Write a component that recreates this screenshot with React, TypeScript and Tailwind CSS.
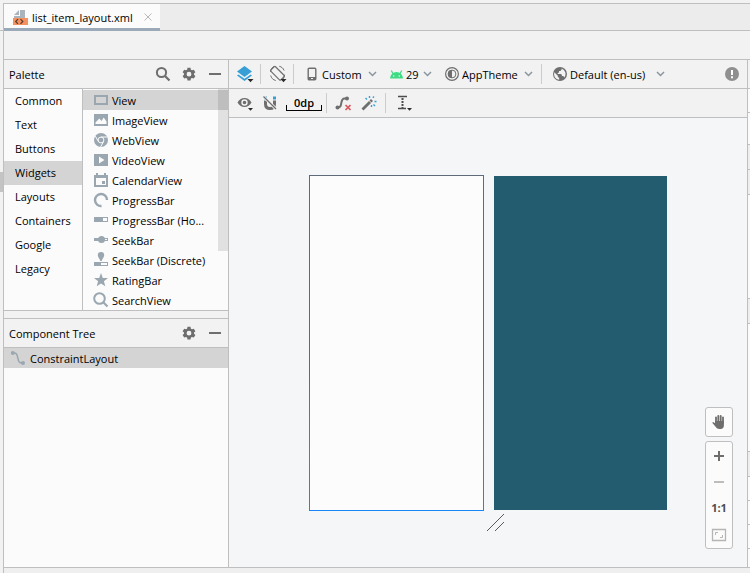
import * as React from "react";
import clsx from "clsx";

type IconProps = { className?: string; children: React.ReactNode };

function Icon({ className, children }: IconProps) {
  return (
    <svg viewBox="0 0 16 16" fill="none" aria-hidden="true" className={clsx("size-4 shrink-0", className)}>
      {children}
    </svg>
  );
}

/* toolbar + header icons */

const SearchIcon = () => (
  <Icon className="text-[#6e6e6e]">
    <circle cx="6.5" cy="6.5" r="4.6" stroke="currentColor" strokeWidth="2" />
    <path d="M10 10l4.5 4.5" stroke="currentColor" strokeWidth="2.2" />
  </Icon>
);

const GearIcon = () => (
  <Icon className="text-[#6e6e6e]">
    <path fill="currentColor" fillRule="evenodd" d="M6.500 1.800h3l.4 1.900 1.100.6 1.800-.5 1.600 2.500-1.400 1.300v1.100l1.400 1.300-1.600 2.500-1.800-.5-1.100.6-.4 1.900h-3l-.4-1.900-1.100-.6-1.800.5L1.600 10 3 8.700V7.600L1.600 6.300l1.600-2.500 1.800.5 1.100-.6zM8 5.800a2.400 2.400 0 1 0 0 4.800 2.400 2.400 0 0 0 0-4.800z" />
  </Icon>
);

const MinusIcon = () => (
  <Icon>
    <path d="M2 7h12v2H2z" fill="#6e6e6e" />
  </Icon>
);

const DropMark = () => <path d="M11 13h5l-2.500 2.800z" fill="#2b2b2b" />;

const LayersIcon = () => (
  <svg viewBox="0 0 18 18" aria-hidden="true" className="size-[18px] shrink-0">
    <path d="M8.500 1L16 6.500 8.500 12 1 6.500z" fill="#389fd6" />
    <path d="M2.400 9.400L8.500 13.800l6.100-4.400L16 10.500 8.500 16 1 10.500z" fill="#389fd6" />
    <path d="M11.500 14h6l-3 3.200z" fill="#2b2b2b" />
  </svg>
);

const RotateIcon = () => (
  <svg viewBox="0 0 18 18" fill="none" aria-hidden="true" className="size-[18px] shrink-0">
    <rect x="5.300" y="1.300" width="6.400" height="14" rx="1" transform="rotate(-45 8.500 8.300)" stroke="#6e6e6e" strokeWidth="1.200" />
    <path d="M1.500 6.800C1.500 4 3.400 1.800 6 1.300M15.500 9.800c0 1.600-.5 2.900-1.500 4.200M1.700 10.500c.6 2.500 2.400 4.400 5 5M10.300 1.300c2.300.5 4 2 4.800 4.200" stroke="#6e6e6e" />
    <path d="M11.500 14h6l-3 3.200z" fill="#2b2b2b" />
  </svg>
);

const PhoneIcon = () => (
  <Icon>
    <rect x="4.200" y="2.200" width="7.600" height="11.600" rx="1" stroke="#6e6e6e" strokeWidth="1.400" />
    <path d="M4 11h8v3H4z" fill="#6e6e6e" />
    <path d="M7 12h2v1H7z" fill="#f2f2f2" />
  </Icon>
);

const AndroidIcon = () => (
  <Icon>
    <path d="M2 12.500a6.500 6.500 0 0 1 13 0z" fill="#3ddc84" />
    <path d="M5.200 8L3.300 4.500M11.800 8l1.900-3.500" stroke="#3ddc84" strokeWidth="1.200" />
    <circle cx="5.700" cy="10" r=".8" fill="#f2f2f2" />
    <circle cx="11.300" cy="10" r=".8" fill="#f2f2f2" />
  </Icon>
);

const ThemeIcon = () => (
  <Icon>
    <circle cx="8" cy="8" r="6.400" stroke="#6e6e6e" strokeWidth="1.200" />
    <circle cx="8" cy="8" r="3.900" stroke="#6e6e6e" />
    <path d="M8 4a4 4 0 0 0 0 8z" fill="#6e6e6e" />
  </Icon>
);

const GlobeIcon = () => (
  <Icon>
    <circle cx="8" cy="8" r="7" fill="#6e6e6e" />
    <path d="M2.300 6.200l3.500 3.600v1l1.400 1.300v1.600C4.300 13.400 2 11 2.100 8zM9.600 2.500v1.200L8.300 5H7v1.500L5.700 7v1.100h3.600l.8 1.900h1.200l1 1.600A5.900 5.900 0 0 0 9.600 2.500z" fill="#f2f2f2" />
  </Icon>
);

const WarnIcon = () => (
  <Icon>
    <circle cx="8" cy="8" r="7" fill="#8f8f8f" />
    <path d="M7 4h2v5H7zM7 10.300h2v2H7z" fill="#fff" />
  </Icon>
);

const ChevronIcon = () => (
  <svg viewBox="0 0 9 6" fill="none" aria-hidden="true" className="pointer-events-none h-[6px] w-[9px] shrink-0">
    <path d="M1 1l3.500 3.500L8 1" stroke="#8b959e" strokeWidth="1.500" />
  </svg>
);

const EyeIcon = () => (
  <Icon>
    <path fillRule="evenodd" fill="#6e6e6e" d="M7.500 3C4.500 3 1.800 4.800.5 7.500 1.800 10.200 4.500 12 7.500 12s5.700-1.800 7-4.500C13.200 4.800 10.500 3 7.500 3zm0 1.300a3.200 3.200 0 1 1 0 6.400 3.200 3.200 0 0 1 0-6.400zm0 1.400a1.800 1.800 0 1 0 0 3.600 1.800 1.800 0 0 0 0-3.600z" />
    <DropMark />
  </Icon>
);

const MagnetIcon = () => (
  <Icon>
    <path d="M3.500 5.500V9c0 3 2 4.500 4.500 4.500S12.500 12 12.500 9V5.500" stroke="#6e6e6e" strokeWidth="3" />
    <path d="M2 1.500h3v3H2zM11 1.500h3v3h-3z" fill="#389fd6" />
    <path d="M1 1l14 14" stroke="#f2f2f2" strokeWidth="3" />
    <path d="M1.500 1.500l12.500 12.500" stroke="#6e6e6e" strokeWidth="1.300" />
  </Icon>
);

const ClearConstraintsIcon = () => (
  <Icon>
    <path d="M1.500 12.500h2c4.500 0 1-9 6-9h2" stroke="#6e6e6e" strokeWidth="2" />
    <circle cx="2.500" cy="12.500" r="2" fill="#6e6e6e" />
    <circle cx="12" cy="3.500" r="2" fill="#6e6e6e" />
    <path d="M10.500 10l5 5M15.500 10l-5 5" stroke="#db5860" strokeWidth="1.700" />
  </Icon>
);

const WandIcon = () => (
  <Icon>
    <path d="M1.500 14.500l7.500-7.500" stroke="#6e6e6e" strokeWidth="2.800" />
    <path d="M9.500 6.500l1.500-1.500" stroke="#6e6e6e" strokeWidth="2.800" />
    <path d="M8.500 1v2M4.500 3l1.500 1.500M13 1.500l-1.200 1.200M13.500 6.500h2M12.500 9.500l1.500 1.500M10.500 10v2" stroke="#389fd6" strokeWidth="1.400" />
  </Icon>
);

const GuidelineIcon = () => (
  <Icon>
    <path d="M2 1.500h9M2 13.500h8" stroke="#4d4d4d" strokeWidth="1.400" />
    <path d="M6.500 3v10" stroke="#4d4d4d" strokeWidth="2" strokeDasharray="2 1" />
    <DropMark />
  </Icon>
);

const XmlFileIcon = () => (
  <Icon>
    <path d="M8 1h5v8H2V7h6zM7 1v5H2z" fill="#9aa7b0" opacity=".85" />
    <path d="M1 9h15v7H1z" fill="#f4915e" />
    <path d="M6 10.200L3.700 12.500 6 14.800M8.500 10.200l2.300 2.300-2.300 2.300" stroke="#5c3b2c" strokeWidth="1.200" />
  </Icon>
);

/* palette icons, all in the same grey-blue */

const WIDGETS: { name: string; icon: React.ReactNode }[] = [
  { name: "View", icon: <rect x="2" y="4" width="12" height="8" stroke="currentColor" strokeWidth="2" /> },
  { name: "ImageView", icon: <path fillRule="evenodd" fill="currentColor" d="M1 2h14v12H1zM2.500 12h11V9.500L10.700 5.500 8.500 9 6.300 6.500 2.500 10.500z" /> },
  {
    name: "WebView",
    icon: (
      <>
        <circle cx="8" cy="8" r="7" fill="currentColor" />
        <circle cx="8" cy="8" r="2.900" stroke="#fbfbfb" strokeWidth="1" />
        <path d="M8 5h6.300M5.400 9.500L2.300 4.200M10.600 9.500L7.500 15" stroke="#fbfbfb" />
      </>
    ),
  },
  { name: "VideoView", icon: <path fillRule="evenodd" fill="currentColor" d="M1 2h14v12H1zM6 4.500v7L11.500 8z" /> },
  { name: "CalendarView", icon: <path fillRule="evenodd" fill="currentColor" d="M3 1h2v2h6V1h2v2h2v12H1V3h2zM3 6v7h10V6zM9 9h3v3H9z" /> },
  { name: "ProgressBar", icon: <path d="M8.500 14A6 6 0 1 1 14 8" stroke="currentColor" strokeWidth="2.400" /> },
  { name: "ProgressBar (Ho...", icon: <path fillRule="evenodd" fill="currentColor" d="M1 5h14v5H1zM10 6v3h4V6z" /> },
  {
    name: "SeekBar",
    icon: (
      <>
        <path fillRule="evenodd" fill="currentColor" d="M1 6h14v3H1zM11.500 7v1H14V7z" />
        <circle cx="8.500" cy="7.500" r="3.500" fill="currentColor" />
      </>
    ),
  },
  {
    name: "SeekBar (Discrete)",
    icon: <path fillRule="evenodd" fill="currentColor" d="M8 0a3.200 3.200 0 0 1 3.200 3.200C11.200 5.500 9 7 8.700 9H7.300C7 7 4.800 5.500 4.800 3.200A3.200 3.200 0 0 1 8 0zM1 10h14v4H1zM8 11v2h6v-2z" />,
  },
  { name: "RatingBar", icon: <path fill="currentColor" d="M8 1l1.800 4.900 5.200.2-4.100 3.200 1.400 5L8 11.400l-4.300 2.900 1.400-5L1 6.100l5.200-.2z" /> },
  {
    name: "SearchView",
    icon: (
      <>
        <circle cx="6.500" cy="6.500" r="5.300" stroke="currentColor" strokeWidth="2" />
        <path d="M10.500 10.500l4 4" stroke="currentColor" strokeWidth="2.200" />
      </>
    ),
  },
];

const CATEGORIES = ["Common", "Text", "Buttons", "Widgets", "Layouts", "Containers", "Google", "Legacy"];

function IconButton({ label, className, children }: { label: string; className?: string; children: React.ReactNode }) {
  return (
    <button type="button" aria-label={label} title={label} className={clsx("flex shrink-0 items-center justify-center", className)}>
      {children}
    </button>
  );
}

function Divider() {
  return <span className="h-5 w-px shrink-0 bg-[#cccccc]" />;
}

type ToolbarSelectProps = { label: string; value: string; icon: React.ReactNode; width: string; className?: string };

function ToolbarSelect({ label, value, icon, width, className }: ToolbarSelectProps) {
  return (
    <label className={clsx("flex shrink-0 items-center", className)}>
      {icon}
      <select aria-label={label} className={clsx("mr-1 ml-0.5 appearance-none pt-0.5 outline-none", width)}>
        <option>{value}</option>
      </select>
      <ChevronIcon />
    </label>
  );
}

function PanelHeader({ title, children }: { title: string; children: React.ReactNode }) {
  return (
    <header className="flex h-7 shrink-0 items-center gap-[10px] px-[5px]">
      <h2 className="mr-auto pt-0.5">{title}</h2>
      {children}
    </header>
  );
}

function Palette() {
  const [category, setCategory] = React.useState("Widgets");
  const [widget, setWidget] = React.useState("View");

  return (
    <section className="shrink-0 border-b border-[#bfbfbf]">
      <PanelHeader title="Palette">
        <IconButton label="Search"><SearchIcon /></IconButton>
        <IconButton label="Palette settings"><GearIcon /></IconButton>
        <IconButton label="Hide palette"><MinusIcon /></IconButton>
      </PanelHeader>
      <div className="flex h-[222px] border-t border-[#bfbfbf] bg-[#fbfbfb]">
        <div className="flex w-[79px] shrink-0 flex-col border-r border-[#bfbfbf]">
          {CATEGORIES.map((name) => (
            <button key={name} type="button" onClick={() => setCategory(name)} className={clsx("h-6 shrink-0 pl-[11px] text-left", name === category && "bg-[#d4d4d4]")}>
              {name}
            </button>
          ))}
        </div>
        <div className="relative min-w-0 flex-1 overflow-hidden pt-px">
          {WIDGETS.map(({ name, icon }) => (
            <button key={name} type="button" onClick={() => setWidget(name)} className={clsx("flex h-5 w-full items-center gap-[3px] pl-[10px] text-left whitespace-nowrap", name === widget && "bg-[#d4d4d4]")}>
              <Icon className="text-[#9aa7b0]">{icon}</Icon>
              <span className="pt-0.5">{name}</span>
            </button>
          ))}
          <span className="absolute top-0 right-0 h-[162px] w-[10px] bg-black/10" />
        </div>
      </div>
    </section>
  );
}

function ComponentTree() {
  return (
    <section className="mt-[7px] flex min-h-0 flex-1 flex-col border-t border-[#bfbfbf]">
      <PanelHeader title="Component Tree">
        <IconButton label="Tree settings"><GearIcon /></IconButton>
        <IconButton label="Hide component tree"><MinusIcon /></IconButton>
      </PanelHeader>
      <div className="min-h-0 flex-1 border-t border-[#bfbfbf] bg-[#fbfbfb]">
        <button type="button" className="flex h-5 w-full items-center gap-1 bg-[#d4d4d4] pl-[6px] text-left">
          <Icon className="text-[#9aa7b0]">
            <path d="M2.500 3h2c5 0 1.500 10 7 10h1" stroke="currentColor" strokeWidth="1.500" />
            <circle cx="2.800" cy="3" r="2" fill="currentColor" />
            <circle cx="13" cy="13" r="2" fill="currentColor" />
          </Icon>
          <span className="pt-0.5">ConstraintLayout</span>
        </button>
      </div>
    </section>
  );
}

function DesignToolbar() {
  return (
    <div className="shrink-0">
      <div className="flex h-7 items-center px-[7px]">
        <IconButton label="Select design surface" className="mr-[6px]"><LayersIcon /></IconButton>
        <Divider />
        <IconButton label="Orientation" className="mr-[6px] ml-2"><RotateIcon /></IconButton>
        <Divider />
        <ToolbarSelect label="Device" value="Custom" width="w-[42px]" className="ml-[10px]" icon={<PhoneIcon />} />
        <ToolbarSelect label="API version" value="29" width="w-[13px]" className="ml-[11px]" icon={<AndroidIcon />} />
        <ToolbarSelect label="Theme" value="AppTheme" width="w-[58px]" className="mr-2 ml-3" icon={<ThemeIcon />} />
        <Divider />
        <ToolbarSelect label="Locale" value="Default (en-us)" width="w-[82px]" className="ml-[10px]" icon={<GlobeIcon />} />
        <IconButton label="Warnings" className="ml-auto"><WarnIcon /></IconButton>
      </div>
      <div className="flex h-[30px] items-center border-y border-[#bfbfbf] pl-2">
        <IconButton label="View options"><EyeIcon /></IconButton>
        <IconButton label="Autoconnect" className="mr-2 ml-[9px]"><MagnetIcon /></IconButton>
        <button type="button" className="relative mr-1 h-4 w-9 shrink-0 text-center leading-3 font-semibold">
          0dp
          <span className="absolute inset-x-0 bottom-0 h-[6px] border-x border-b border-black" />
        </button>
        <Divider />
        <IconButton label="Clear all constraints" className="ml-2"><ClearConstraintsIcon /></IconButton>
        <IconButton label="Infer constraints" className="mr-2 ml-[10px]"><WandIcon /></IconButton>
        <Divider />
        <IconButton label="Guidelines" className="ml-[10px]"><GuidelineIcon /></IconButton>
      </div>
    </div>
  );
}

function ZoomControls() {
  const box = "flex w-7 flex-col items-center rounded-[3px] border border-[#bfbfbf] bg-[#fbfbfb]";
  return (
    <div className="absolute right-[14px] bottom-[18px] flex flex-col gap-1">
      <div className={box}>
        <IconButton label="Pan" className="h-7">
          <Icon>
            <path d="M5 9V3.300M7.300 8V1.800M9.700 8V1.800M12 9V3.300" stroke="#6e6e6e" strokeWidth="1.800" strokeLinecap="round" />
            <path d="M4.100 7h8.800v4.500c0 2-1.300 3.500-3.200 3.500H8.200c-1.500 0-2.400-.6-3.200-1.700L1.200 8.800l1-.8 1.900 1.300z" fill="#6e6e6e" />
          </Icon>
        </IconButton>
      </div>
      <div className={box}>
        <IconButton label="Zoom in" className="h-7">
          <Icon><path d="M7 3h2v4h4v2H9v4H7V9H3V7h4z" fill="#6e6e6e" /></Icon>
        </IconButton>
        <IconButton label="Zoom out" className="h-6">
          <Icon><path d="M3 7h10v2H3z" fill="#bdbdbd" /></Icon>
        </IconButton>
        <button type="button" className="h-7 font-bold text-[#4d4d4d]">1:1</button>
        <IconButton label="Zoom to fit" className="h-[26px]">
          <Icon>
            <path d="M1.500 2.500h13v11h-13z" stroke="#b5b5b5" strokeWidth="1.300" />
            <path d="M4.500 8V5.500H7M11.500 8v2.500H9" stroke="#b5b5b5" />
          </Icon>
        </IconButton>
      </div>
    </div>
  );
}

function DesignSurface() {
  return (
    <div className="relative flex min-h-0 flex-1 items-center justify-center bg-[#f5f6f8]">
      <div className="relative flex items-center gap-[10px]">
        <div className="h-[336px] w-[175px] bg-linear-to-b from-[#5f6b7a] from-60% to-[#1886f7] to-90% p-px">
          <div className="h-full bg-[#fcfcfc]" />
        </div>
        <div className="h-[334px] w-[173px] bg-[#235c6e]" />
        <svg viewBox="0 0 18 18" aria-hidden="true" className="absolute top-[338px] left-[178px] size-[18px]">
          <path d="M0 18L17 1M8 18l9-9" stroke="#5a5a5a" />
        </svg>
      </div>
      <ZoomControls />
    </div>
  );
}

/* Sliver of the neighbouring attributes panel: section rows only */
function AttributesEdge() {
  const line = "shrink-0 border-b border-[#bfbfbf]";
  return (
    <aside className="flex w-[3px] shrink-0 flex-col overflow-hidden border-l border-[#bfbfbf] bg-[#fbfbfb]">
      <div className={clsx(line, "h-[29px] bg-[#f2f2f2]")} />
      <div className={clsx(line, "h-6")} />
      <div className={clsx(line, "h-8")} />
      <div className={clsx(line, "h-[25px] bg-[#eeeeee]")} />
      <div className={clsx(line, "h-[25px] bg-[#eeeeee]")} />
      <div className={clsx(line, "h-[104px]")} />
      <div className={clsx(line, "h-[25px] bg-[#eeeeee]")} />
      <div className={clsx(line, "h-[128px]")} />
      <div className={clsx(line, "h-[25px] bg-[#eeeeee]")} />
      <div className={clsx(line, "h-6")} />
      <div className={clsx(line, "h-6")} />
      <div className={clsx(line, "h-6")} />
    </aside>
  );
}

export default function App() {
  return (
    <div className="flex h-screen flex-col overflow-hidden bg-[#f2f2f2] pt-[3px] font-['Open_Sans','Noto_Sans',sans-serif] text-[11px] leading-4 text-black">
      <div className="flex min-h-0 flex-1">
        <div className="flex w-[3px] shrink-0 flex-col">
          <div className="h-7 border-b border-[#bfbfbf]" />
          <div className="mt-[141px] h-5 bg-[#c4c4c4]" />
        </div>
        <div className="flex min-w-0 flex-1 flex-col border-t border-l border-[#bfbfbf]">
          <nav className="flex h-[27px] shrink-0 border-b border-[#bfbfbf] bg-[#ececec]">
            <div className="-mb-px flex w-[156px] shrink-0 items-center border-b-3 border-[#9ba9b9] bg-[#fbfbfb] pt-[2px] pl-2">
              <XmlFileIcon />
              <a href="#list_item_layout" className="ml-1 pt-0.5">list_item_layout.xml</a>
              <button type="button" aria-label="Close tab" className="mr-2 ml-auto">
                <svg viewBox="0 0 8 8" aria-hidden="true" className="size-2">
                  <path d="M.5.5l7 7M7.500.5l-7 7" stroke="#b4b9bd" />
                </svg>
              </button>
            </div>
          </nav>
          <div className="h-7 shrink-0" />
          <div className="flex min-h-0 flex-1 border-y border-[#bfbfbf]">
            <div className="flex w-[225px] shrink-0 flex-col border-r border-[#bfbfbf]">
              <Palette />
              <ComponentTree />
            </div>
            <main className="flex min-w-0 flex-1 flex-col">
              <DesignToolbar />
              <DesignSurface />
            </main>
            <AttributesEdge />
          </div>
          <footer className="h-[5px] shrink-0 bg-[#efefef]" />
        </div>
      </div>
    </div>
  );
}
